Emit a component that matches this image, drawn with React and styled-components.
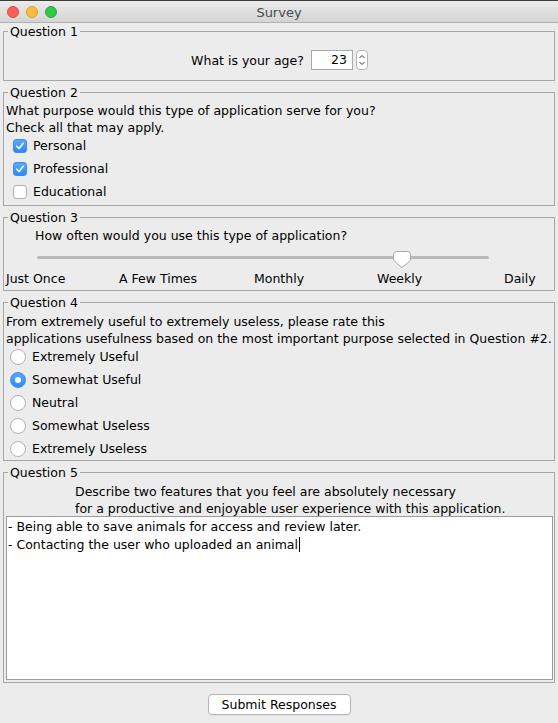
import styled, { createGlobalStyle } from 'styled-components';

const GlobalStyle = createGlobalStyle`
  * { box-sizing: border-box; }
  html, body {
    margin: 0;
    padding: 0;
    background: #ececec;
  }
  body {
    font-family: "DejaVu Sans", "Liberation Sans", sans-serif;
    font-size: 12.5px;
    color: #000;
  }
`;

const Window = styled.div`
  display: flex;
  flex-direction: column;
  width: 558px;
  height: 723px;
  background: #ececec;
  overflow: hidden;
`;

const TitleBar = styled.header`
  flex-shrink: 0;
  display: grid;
  grid-template-columns: 1fr auto 1fr;
  align-items: center;
  height: 23px;
  padding-top: 1px;
  border-top: 1px solid #3c3c3c;
  border-bottom: 1px solid #b1b1b1;
  background: linear-gradient(#ebebeb, #d4d4d4);
  font-size: 13px;
  color: #4a4a4a;
`;

const Lights = styled.div`
  display: flex;
  gap: 7px;
  padding-left: 7px;
`;

const Light = styled.span`
  width: 12px;
  height: 12px;
  border-radius: 50%;
  background: ${p => p.$color};
  border: 1px solid ${p => p.$edge};
`;

const Panels = styled.div`
  flex: 1;
  min-height: 0;
  display: flex;
  flex-direction: column;
  gap: 3px;
  padding: 0 3px;
`;

const Panel = styled.fieldset`
  margin: 0;
  min-width: 0;
  padding: ${p => p.$pad || '0'} 1px ${p => p.$padBottom || '0'} 2px;
  border: 1px solid #a6a6a6;
  ${p => p.$grow && 'flex: 1; display: flex; flex-direction: column; min-height: 0;'}
`;

const Legend = styled.legend`
  padding: 2px 2px 0;
  margin-left: 2px;
  line-height: 14px;
`;

const Text = styled.div`
  height: 17px;
  padding: 2px 0 0 ${p => p.$indent || 0}px;
  line-height: 17px;
  white-space: nowrap;
`;

const AgeRow = styled.div`
  display: flex;
  align-items: center;
  justify-content: center;
  height: 22px;
  margin-top: 10px;
  margin-bottom: 9px;
`;

const AgeLabel = styled.span`
  margin-right: 7px;
`;

const NumberBox = styled.div`
  width: 42px;
  height: 20px;
  padding-right: 5px;
  border: 1px solid #a9a9a9;
  background: #fff;
  text-align: right;
  line-height: 18px;
`;

const Stepper = styled.div`
  display: flex;
  align-items: center;
  justify-content: center;
  width: 12px;
  height: 20px;
  margin-left: 3px;
  border: 1px solid #b5b5b5;
  border-radius: 4px;
  background: #fff;
`;

const Option = styled.label`
  display: flex;
  align-items: center;
  gap: 6px;
  height: 23px;
  padding-left: ${p => p.$inset}px;
`;

const Box = styled.span`
  display: flex;
  align-items: center;
  justify-content: center;
  width: 14px;
  height: 14px;
  border-radius: 3px;
  background: ${p => (p.$checked ? 'linear-gradient(#5aa8fb, #2f8af3)' : '#fff')};
  border: 1px solid ${p => (p.$checked ? '#3a8ff0' : '#b2b2b2')};
`;

const Radio = styled.span`
  display: flex;
  align-items: center;
  justify-content: center;
  width: 16px;
  height: 16px;
  border-radius: 50%;
  background: ${p => (p.$checked ? 'linear-gradient(#5aa8fb, #2f8af3)' : '#fff')};
  border: 1px solid ${p => (p.$checked ? '#3a8ff0' : '#b2b2b2')};

  &::after {
    content: '';
    display: ${p => (p.$checked ? 'block' : 'none')};
    width: 6px;
    height: 6px;
    border-radius: 50%;
    background: #fff;
  }
`;

const Slider = styled.div`
  position: relative;
  height: 28px;
  padding-top: 14px;
`;

const Track = styled.div`
  width: 452px;
  height: 3px;
  margin-left: 31px;
  border-radius: 2px;
  background: #b9b9b9;
`;

const Thumb = styled.svg`
  position: absolute;
  top: 9px;
  left: ${p => p.$x}px;
`;

const Scale = styled.div`
  position: relative;
  height: 17px;
  margin-bottom: 2px;
`;

const Tick = styled.span`
  position: absolute;
  top: 0;
  left: ${p => p.$x}px;
  line-height: 17px;
  white-space: nowrap;
`;

const TextArea = styled.div`
  flex: 1;
  min-height: 0;
  margin-top: 1px;
  margin-bottom: 2px;
  padding: 1px 0 0 1px;
  border: 1px solid #9c9c9c;
  background: #fff;
  line-height: 18px;
  white-space: pre;
`;

const Caret = styled.span`
  display: inline-block;
  width: 1px;
  height: 15px;
  margin-left: 1px;
  vertical-align: -3px;
  background: #000;
`;

const Footer = styled.footer`
  flex-shrink: 0;
  display: flex;
  justify-content: center;
  align-items: flex-start;
  height: 40px;
  padding-top: 11px;
`;

const SubmitButton = styled.button`
  width: 143px;
  height: 21px;
  padding: 0;
  border: 1px solid #b4b4b4;
  border-radius: 4px;
  background: #fff;
  font-family: inherit;
  font-size: 12.5px;
  color: #000;
  box-shadow: 0 1px 0 rgba(0, 0, 0, 0.04);
`;

const Check = () => (
  <svg width="10" height="10" viewBox="0 0 10 10">
    <path d="M1.8 5.2 L4 7.5 L8.3 2.3" fill="none" stroke="#fff" strokeWidth="1.6" strokeLinecap="round" strokeLinejoin="round" />
  </svg>
);

const purposes = [
  { label: 'Personal', checked: true },
  { label: 'Professional', checked: true },
  { label: 'Educational', checked: false },
];

const ratings = ['Extremely Useful', 'Somewhat Useful', 'Neutral', 'Somewhat Useless', 'Extremely Useless'];

const frequency = [
  { label: 'Just Once', x: 0 },
  { label: 'A Few Times', x: 113 },
  { label: 'Monthly', x: 248 },
  { label: 'Weekly', x: 371 },
  { label: 'Daily', x: 498 },
];

export default function App() {
  return (
    <>
      <GlobalStyle />
      <Window>
        <TitleBar>
          <Lights>
            <Light $color="#fc605b" $edge="#de4a44" />
            <Light $color="#fdbc40" $edge="#dea034" />
            <Light $color="#34c84a" $edge="#28a83a" />
          </Lights>
          <span>Survey</span>
          <span />
        </TitleBar>

        <Panels>
          <Panel>
            <Legend>Question 1</Legend>
            <AgeRow>
              <AgeLabel>What is your age?</AgeLabel>
              <NumberBox>23</NumberBox>
              <Stepper>
                <svg width="8" height="14" viewBox="0 0 8 14">
                  <path d="M1.5 5 L4 2.5 L6.5 5 M1.5 9 L4 11.5 L6.5 9" fill="none" stroke="#333" strokeWidth="1" />
                </svg>
              </Stepper>
            </AgeRow>
          </Panel>

          <Panel $pad="0" $padBottom="2px">
            <Legend>Question 2</Legend>
            <Text>What purpose would this type of application serve for you?</Text>
            <Text>Check all that may apply.</Text>
            {purposes.map(p => (
              <Option key={p.label} $inset={7}>
                <Box $checked={p.checked}>{p.checked && <Check />}</Box>
                {p.label}
              </Option>
            ))}
          </Panel>

          <Panel $pad="0" $padBottom="1px">
            <Legend>Question 3</Legend>
            <Text $indent={29}>How often would you use this type of application?</Text>
            <Slider>
              <Track />
              <Thumb $x={387} width="18" height="17" viewBox="0 0 18 17">
                <path d="M3.5 0.5 H14.5 Q17.5 0.5 17.5 3.5 V9.5 L9 16.5 L0.5 9.5 V3.5 Q0.5 0.5 3.5 0.5 Z" fill="#fff" stroke="#a9a9a9" />
              </Thumb>
            </Slider>
            <Scale>
              {frequency.map(f => (
                <Tick key={f.label} $x={f.x}>{f.label}</Tick>
              ))}
            </Scale>
          </Panel>

          <Panel $pad="1px">
            <Legend>Question 4</Legend>
            <Text>From extremely useful to extremely useless, please rate this</Text>
            <Text>applications usefulness based on the most important purpose selected in Question #2.</Text>
            {ratings.map(r => (
              <Option key={r} $inset={4}>
                <Radio $checked={r === 'Somewhat Useful'} />
                {r}
              </Option>
            ))}
          </Panel>

          <Panel $pad="1px" $grow>
            <Legend>Question 5</Legend>
            <Text $indent={69}>Describe two features that you feel are absolutely necessary</Text>
            <Text $indent={69}>for a productive and enjoyable user experience with this application.</Text>
            <TextArea>
              {'- Being able to save animals for access and review later.\n- Contacting the user who uploaded an animal'}
              <Caret />
            </TextArea>
          </Panel>
        </Panels>

        <Footer>
          <SubmitButton>Submit Responses</SubmitButton>
        </Footer>
      </Window>
    </>
  );
}
